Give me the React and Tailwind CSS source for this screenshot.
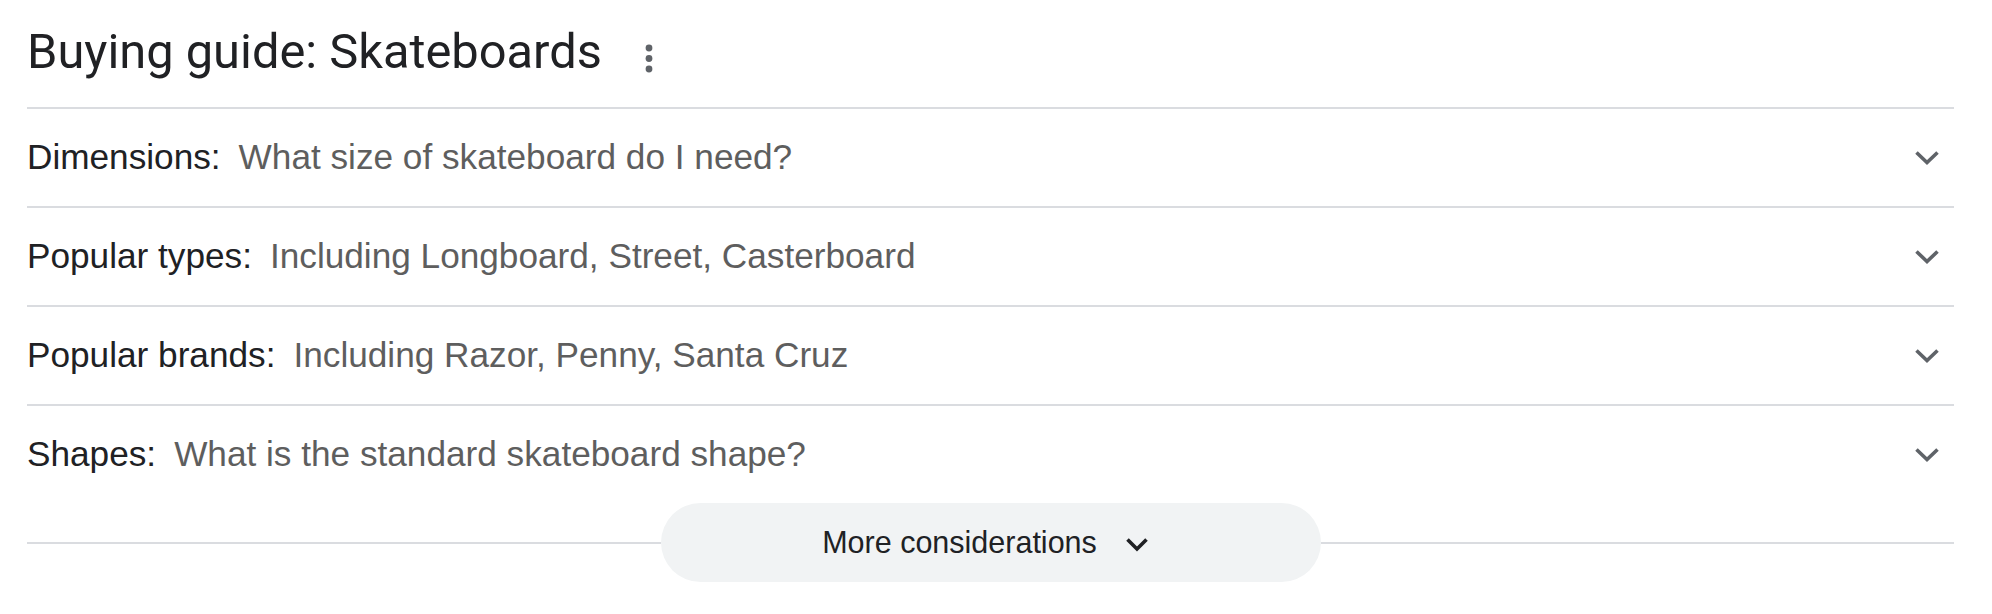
export default function App() {
  const rows = [
    ["Dimensions:", "What size of skateboard do I need?"],
    ["Popular types:", "Including Longboard, Street, Casterboard"],
    ["Popular brands:", "Including Razor, Penny, Santa Cruz"],
    ["Shapes:", "What is the standard skateboard shape?"],
  ];
  return (
    <div className="w-[1992px] h-[614px] bg-white pl-[27px] pr-[38px] font-['Liberation_Sans',Arial,sans-serif]">
      <div className="h-[107px] flex items-start pt-[24px]">
        <h2 className="text-[48.8px] leading-[56px] text-[#202124] font-['Roboto',sans-serif] font-normal">
          Buying guide: Skateboards
        </h2>
        <svg className="ml-[42px] mt-[20px]" width="10" height="32" viewBox="0 0 10 32">
          <circle cx="5" cy="4" r="3.4" fill="#5f6368" />
          <circle cx="5" cy="14.5" r="3.4" fill="#5f6368" />
          <circle cx="5" cy="25" r="3.4" fill="#5f6368" />
        </svg>
      </div>
      {rows.map(([label, value]) => (
        <div
          key={label}
          className="h-[99px] border-t-2 border-[#dadce0] flex items-center justify-between pr-[14px]"
        >
          <div className="text-[35.2px] whitespace-nowrap">
            <span className="text-[#202124]">{label}</span>
            <span className="ml-[18px] text-[#5e5e5e]">{value}</span>
          </div>
          <svg width="26" height="16" viewBox="0 0 26 16">
            <polyline
              points="2.5,2.5 13,12.5 23.5,2.5"
              fill="none"
              stroke="#5f6368"
              strokeWidth="3.6"
            />
          </svg>
        </div>
      ))}
      <div className="h-[79px] flex items-center">
        <div className="flex-1 h-[2px] bg-[#dadce0]" />
        <button className="w-[660px] h-[79px] rounded-full bg-[#f1f3f4] flex items-center justify-center pr-[10px]">
          <span className="text-[30.5px] text-[#202124]">More considerations</span>
          <svg className="ml-[28px] mt-[4px]" width="24" height="16" viewBox="0 0 24 16">
            <polyline
              points="2.5,2.5 12,12 21.5,2.5"
              fill="none"
              stroke="#202124"
              strokeWidth="3.6"
            />
          </svg>
        </button>
        <div className="flex-1 h-[2px] bg-[#dadce0]" />
      </div>
    </div>
  );
}
